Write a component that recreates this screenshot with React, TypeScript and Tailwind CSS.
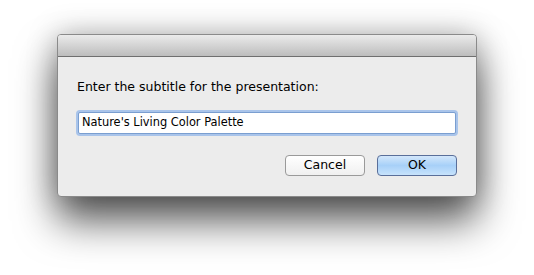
export default function App() {
  const font = { fontFamily: '"Lucida Grande", "DejaVu Sans", sans-serif' };
  return (
    <div className="w-[534px] h-[275px] bg-white pl-[57px] pt-[34px]" style={font}>
      <div className="w-[420px] h-[163px] rounded-[4px] border border-[#8a8a8a] bg-[#ececec] shadow-[0_24px_40px_rgba(0,0,0,0.65),0_0_30px_rgba(0,0,0,0.25)] flex flex-col overflow-hidden">
        <div className="h-[22px] shrink-0 bg-gradient-to-b from-[#ebebeb] to-[#bdbdbd] border-b border-[#6f6f6f]" />
        <div className="flex flex-col pl-[19px] pr-[19px] pt-[22px]">
          <div className="text-[12.5px] leading-[16px] text-black">Enter the subtitle for the presentation:</div>
          <div className="mt-[17px] h-[22px] rounded-[2px] bg-white border border-[#7a9ed0] shadow-[0_0_0_2px_#a9c4ea] ml-[1px] mr-[1px] flex items-center pl-[3px] text-[11.4px] text-black">
            Nature&apos;s Living Color Palette
          </div>
          <div className="mt-[21px] flex justify-end gap-[12px]">
            <button className="w-[80px] h-[21px] rounded-[4px] border border-[#9a9a9a] bg-gradient-to-b from-white to-[#f0f0f0] text-[12.5px] text-black leading-none">
              Cancel
            </button>
            <button className="w-[80px] h-[21px] rounded-[4px] border border-[#5a6f9a] bg-gradient-to-b from-[#d3e7fb] via-[#a7d0f8] to-[#c7e3fc] text-[12.5px] text-black leading-none">
              OK
            </button>
          </div>
        </div>
      </div>
    </div>
  );
}
